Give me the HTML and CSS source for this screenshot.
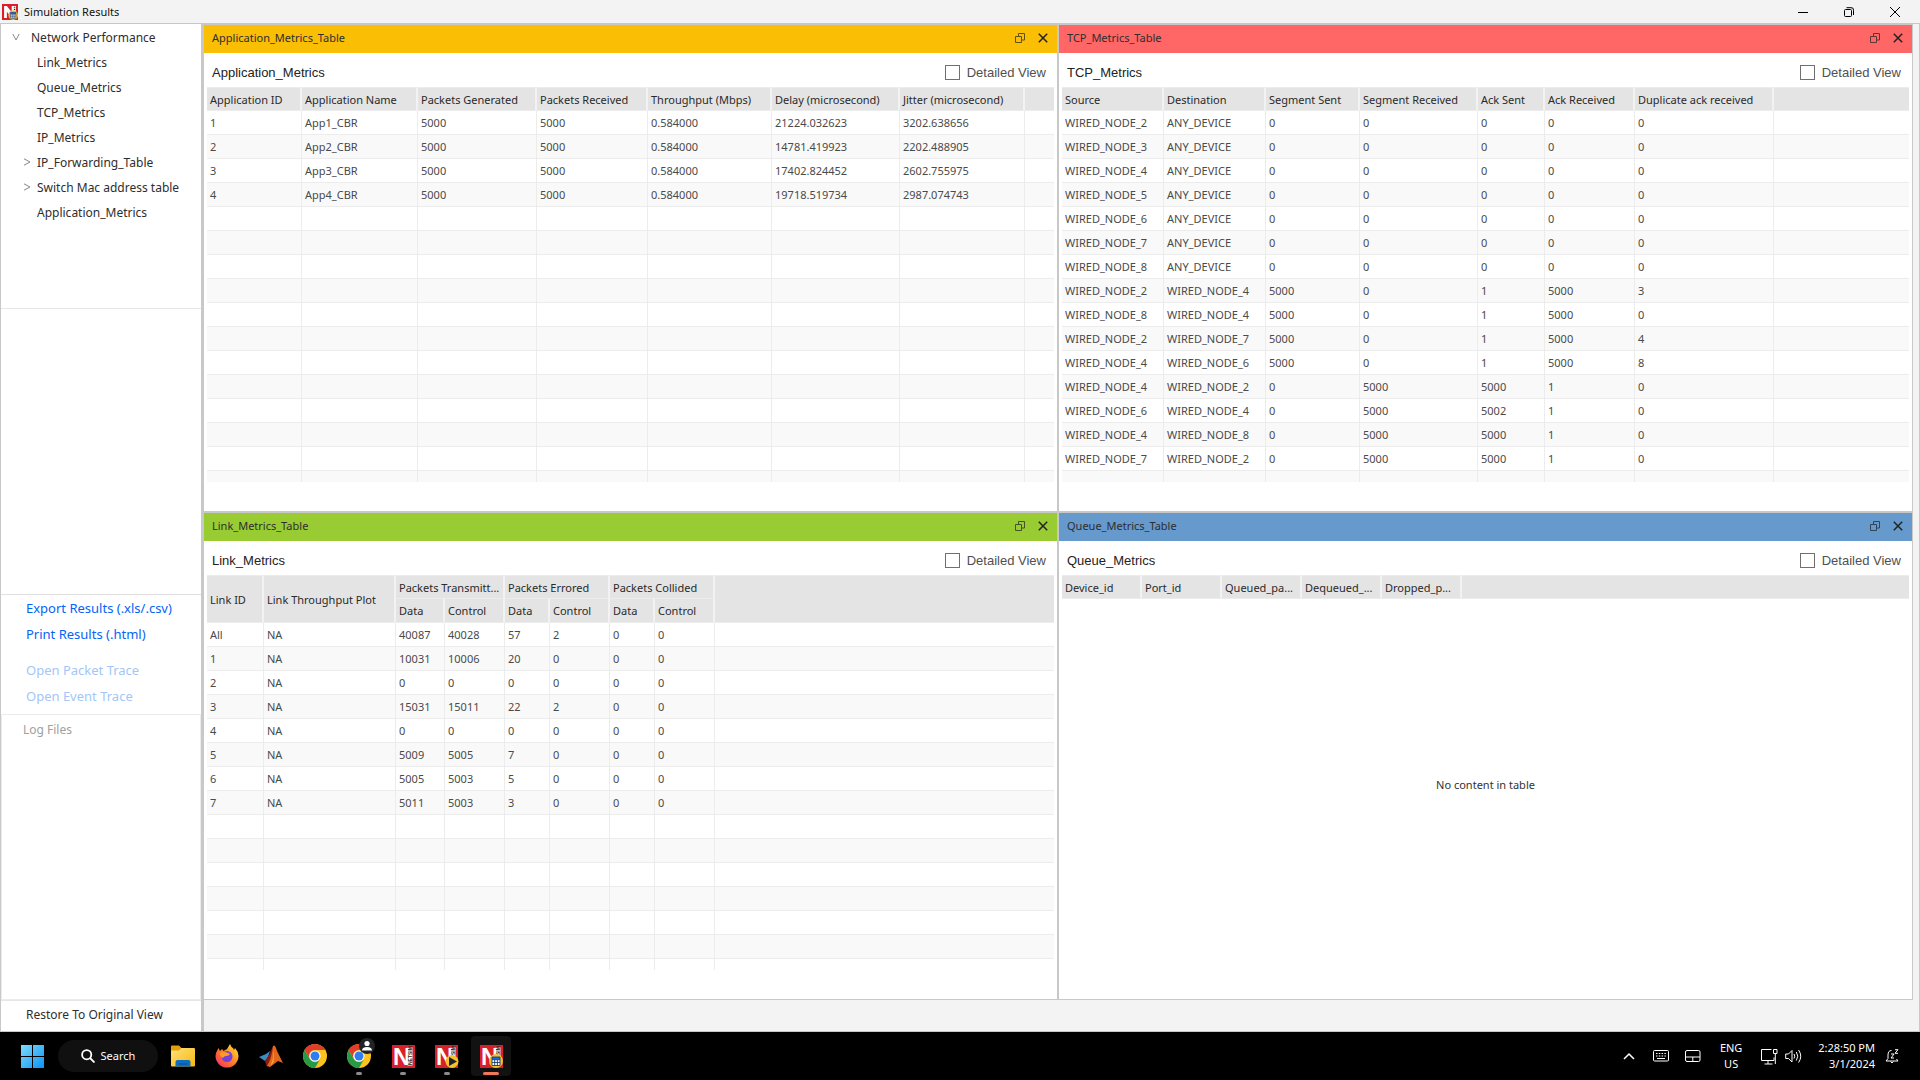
FILE: index.html
```html
<!DOCTYPE html>
<html lang="en">
<head>
<meta charset="utf-8">
<title>Simulation Results</title>
<link rel="stylesheet" href="styles.css">
</head>
<body>
<svg class="defs" aria-hidden="true">
  <symbol id="popout" viewBox="0 0 10 10"><path d="M.5 3.500h6v6h-6zM3.500 3.500v-3h6v6.500h-3" fill="none" stroke="currentColor"/></symbol>
  <symbol id="cross" viewBox="0 0 10 10"><path d="M.8.8l8.400 8.400M9.200.8L.8 9.200" fill="none" stroke="currentColor" stroke-width="1.500"/></symbol>
  <symbol id="netsim" viewBox="0 0 23 23">
    <path fill="#d9202a" d="M0 0h23v23H0z"/>
    <path fill="#fff" d="M15.500 2.500h5v18h-5z"/>
    <text class="logo-n" x="1" y="20">N</text>
    <text class="logo-name" transform="translate(20 20) rotate(-90)">NETSIM</text>
  </symbol>
  <symbol id="chrome" viewBox="0 0 24 24">
    <circle cx="12" cy="12" r="12" fill="#fcc31e"/>
    <path fill="#e33b2e" d="M1.610 6A12 12 0 0 1 22.390 6H12a6 6 0 0 0-5.200 9z"/>
    <path fill="#259b46" d="M1.610 6A12 12 0 0 0 12 24l5.200-9A6 6 0 0 1 6.800 15z"/>
    <circle cx="12" cy="12" r="5.600" fill="#fff"/><circle cx="12" cy="12" r="4.500" fill="#2f7df0"/>
  </symbol>
  <symbol id="table-badge" viewBox="0 0 14 14">
    <circle cx="7" cy="7" r="7" fill="#f2c230"/><path fill="#fff" d="M3 3h8v8.500H3z"/><path fill="#1668d8" d="M3 3h8v2.500H3z"/><path d="M3 3h8v8.500H3zM3 5.700h8M3 8.500h8M5.700 5.700v6M8.400 5.700v6" fill="none" stroke="#1d3c6e" stroke-width=".9"/>
  </symbol>
</svg>

<header class="titlebar">
  <svg class="app-icon" viewBox="0 0 23 23"><path fill="#d9202a" d="M0 0h23v23H0z"/><path fill="#fff" d="M3 3h4l7 9V3h6v17h-6L7 11v9H3z"/><path fill="#2b2b2b" d="M17 4h2v1.500h-2zM17 7h2v1.500h-2z"/><use href="#table-badge" x="9" y="9" width="14" height="14"/></svg>
  <h1>Simulation Results</h1>
  <div class="window-buttons">
    <button aria-label="Minimize"><svg width="10" height="10"><path d="M0 5.500h10" stroke="#000"/></svg></button>
    <button aria-label="Restore"><svg width="10" height="10" fill="none" stroke="#000"><rect x=".5" y="2.500" width="7" height="7" rx="1"/><path d="M2.500.7h4.500a2.300 2.300 0 0 1 2.500 2.500V8"/></svg></button>
    <button aria-label="Close"><svg width="10" height="10"><path d="M0 0l10 10M10 0L0 10" stroke="#000"/></svg></button>
  </div>
</header>

<main class="workspace">
  <aside class="sidebar">
    <nav class="tree">
      <a class="root" href="#network"><svg class="arrow" viewBox="0 0 8 8"><path d="M.8 1L4 7 7.200 1"/></svg>Network Performance</a>
      <a href="#link">Link_Metrics</a>
      <a href="#queue">Queue_Metrics</a>
      <a href="#tcp">TCP_Metrics</a>
      <a href="#ip">IP_Metrics</a>
      <a href="#forwarding"><svg class="arrow" viewBox="0 0 8 8"><path d="M1 .8L7 4 1 7.200"/></svg>IP_Forwarding_Table</a>
      <a href="#switch"><svg class="arrow" viewBox="0 0 8 8"><path d="M1 .8L7 4 1 7.200"/></svg>Switch Mac address table</a>
      <a href="#application">Application_Metrics</a>
    </nav>
    <div class="plots"></div>
    <div class="exports">
      <button>Export Results (.xls/.csv)</button>
      <button>Print Results (.html)</button>
      <button class="off spaced" disabled>Open Packet Trace</button>
      <button class="off" disabled>Open Event Trace</button>
    </div>
    <div class="logs">Log Files</div>
    <button class="restore">Restore To Original View</button>
  </aside>

  <div class="panels">
    <section class="panel" id="application">
      <header class="panel-title amber"><h2>Application_Metrics_Table</h2><button aria-label="Pop out"><svg class="pop"><use href="#popout"/></svg></button><button aria-label="Close"><svg><use href="#cross"/></svg></button></header>
      <div class="panel-bar"><h3>Application_Metrics</h3><label><input type="checkbox">Detailed View</label></div>
      <div class="sheet">
        <table>
          <colgroup><col style="width:95px"><col style="width:116px"><col style="width:119px"><col style="width:111px"><col style="width:124px"><col style="width:128px"><col style="width:125px"><col></colgroup>
          <thead><tr><th>Application ID<th>Application Name<th>Packets Generated<th>Packets Received<th>Throughput (Mbps)<th>Delay (microsecond)<th>Jitter (microsecond)<th></tr></thead>
          <tbody>
            <tr><td>1<td>App1_CBR<td>5000<td>5000<td>0.584000<td>21224.032623<td>3202.638656<td></tr>
            <tr><td>2<td>App2_CBR<td>5000<td>5000<td>0.584000<td>14781.419923<td>2202.488905<td></tr>
            <tr><td>3<td>App3_CBR<td>5000<td>5000<td>0.584000<td>17402.824452<td>2602.755975<td></tr>
            <tr><td>4<td>App4_CBR<td>5000<td>5000<td>0.584000<td>19718.519734<td>2987.074743<td></tr>
            <tr><td><td><td><td><td><td><td><td></tr>
            <tr><td><td><td><td><td><td><td><td></tr>
            <tr><td><td><td><td><td><td><td><td></tr>
            <tr><td><td><td><td><td><td><td><td></tr>
            <tr><td><td><td><td><td><td><td><td></tr>
            <tr><td><td><td><td><td><td><td><td></tr>
            <tr><td><td><td><td><td><td><td><td></tr>
            <tr><td><td><td><td><td><td><td><td></tr>
            <tr><td><td><td><td><td><td><td><td></tr>
            <tr><td><td><td><td><td><td><td><td></tr>
            <tr><td><td><td><td><td><td><td><td></tr>
            <tr><td><td><td><td><td><td><td><td></tr>
          </tbody>
        </table>
      </div>
    </section>

    <section class="panel" id="tcp">
      <header class="panel-title coral"><h2>TCP_Metrics_Table</h2><button aria-label="Pop out"><svg class="pop"><use href="#popout"/></svg></button><button aria-label="Close"><svg><use href="#cross"/></svg></button></header>
      <div class="panel-bar"><h3>TCP_Metrics</h3><label><input type="checkbox">Detailed View</label></div>
      <div class="sheet">
        <table>
          <colgroup><col style="width:102px"><col style="width:102px"><col style="width:94px"><col style="width:118px"><col style="width:67px"><col style="width:90px"><col style="width:139px"><col></colgroup>
          <thead><tr><th>Source<th>Destination<th>Segment Sent<th>Segment Received<th>Ack Sent<th>Ack Received<th>Duplicate ack received<th></tr></thead>
          <tbody>
            <tr><td>WIRED_NODE_2<td>ANY_DEVICE<td>0<td>0<td>0<td>0<td>0<td></tr>
            <tr><td>WIRED_NODE_3<td>ANY_DEVICE<td>0<td>0<td>0<td>0<td>0<td></tr>
            <tr><td>WIRED_NODE_4<td>ANY_DEVICE<td>0<td>0<td>0<td>0<td>0<td></tr>
            <tr><td>WIRED_NODE_5<td>ANY_DEVICE<td>0<td>0<td>0<td>0<td>0<td></tr>
            <tr><td>WIRED_NODE_6<td>ANY_DEVICE<td>0<td>0<td>0<td>0<td>0<td></tr>
            <tr><td>WIRED_NODE_7<td>ANY_DEVICE<td>0<td>0<td>0<td>0<td>0<td></tr>
            <tr><td>WIRED_NODE_8<td>ANY_DEVICE<td>0<td>0<td>0<td>0<td>0<td></tr>
            <tr><td>WIRED_NODE_2<td>WIRED_NODE_4<td>5000<td>0<td>1<td>5000<td>3<td></tr>
            <tr><td>WIRED_NODE_8<td>WIRED_NODE_4<td>5000<td>0<td>1<td>5000<td>0<td></tr>
            <tr><td>WIRED_NODE_2<td>WIRED_NODE_7<td>5000<td>0<td>1<td>5000<td>4<td></tr>
            <tr><td>WIRED_NODE_4<td>WIRED_NODE_6<td>5000<td>0<td>1<td>5000<td>8<td></tr>
            <tr><td>WIRED_NODE_4<td>WIRED_NODE_2<td>0<td>5000<td>5000<td>1<td>0<td></tr>
            <tr><td>WIRED_NODE_6<td>WIRED_NODE_4<td>0<td>5000<td>5002<td>1<td>0<td></tr>
            <tr><td>WIRED_NODE_4<td>WIRED_NODE_8<td>0<td>5000<td>5000<td>1<td>0<td></tr>
            <tr><td>WIRED_NODE_7<td>WIRED_NODE_2<td>0<td>5000<td>5000<td>1<td>0<td></tr>
            <tr><td><td><td><td><td><td><td><td></tr>
          </tbody>
        </table>
      </div>
    </section>

    <section class="panel" id="link">
      <header class="panel-title lime"><h2>Link_Metrics_Table</h2><button aria-label="Pop out"><svg class="pop"><use href="#popout"/></svg></button><button aria-label="Close"><svg><use href="#cross"/></svg></button></header>
      <div class="panel-bar"><h3>Link_Metrics</h3><label><input type="checkbox">Detailed View</label></div>
      <div class="sheet">
        <table>
          <colgroup><col style="width:57px"><col style="width:132px"><col style="width:49px"><col style="width:60px"><col style="width:45px"><col style="width:60px"><col style="width:45px"><col style="width:60px"><col></colgroup>
          <thead>
            <tr><th rowspan="2">Link ID<th rowspan="2">Link Throughput Plot<th colspan="2">Packets Transmitt...<th colspan="2">Packets Errored<th colspan="2">Packets Collided<th rowspan="2"></tr>
            <tr class="sub"><th>Data<th>Control<th>Data<th>Control<th>Data<th>Control</tr>
          </thead>
          <tbody>
            <tr><td>All<td>NA<td>40087<td>40028<td>57<td>2<td>0<td>0<td></tr>
            <tr><td>1<td>NA<td>10031<td>10006<td>20<td>0<td>0<td>0<td></tr>
            <tr><td>2<td>NA<td>0<td>0<td>0<td>0<td>0<td>0<td></tr>
            <tr><td>3<td>NA<td>15031<td>15011<td>22<td>2<td>0<td>0<td></tr>
            <tr><td>4<td>NA<td>0<td>0<td>0<td>0<td>0<td>0<td></tr>
            <tr><td>5<td>NA<td>5009<td>5005<td>7<td>0<td>0<td>0<td></tr>
            <tr><td>6<td>NA<td>5005<td>5003<td>5<td>0<td>0<td>0<td></tr>
            <tr><td>7<td>NA<td>5011<td>5003<td>3<td>0<td>0<td>0<td></tr>
            <tr><td><td><td><td><td><td><td><td><td></tr>
            <tr><td><td><td><td><td><td><td><td><td></tr>
            <tr><td><td><td><td><td><td><td><td><td></tr>
            <tr><td><td><td><td><td><td><td><td><td></tr>
            <tr><td><td><td><td><td><td><td><td><td></tr>
            <tr><td><td><td><td><td><td><td><td><td></tr>
            <tr><td><td><td><td><td><td><td><td><td></tr>
          </tbody>
        </table>
      </div>
    </section>

    <section class="panel" id="queue">
      <header class="panel-title blue"><h2>Queue_Metrics_Table</h2><button aria-label="Pop out"><svg class="pop"><use href="#popout"/></svg></button><button aria-label="Close"><svg><use href="#cross"/></svg></button></header>
      <div class="panel-bar"><h3>Queue_Metrics</h3><label><input type="checkbox">Detailed View</label></div>
      <div class="sheet">
        <table>
          <colgroup><col style="width:80px"><col style="width:80px"><col style="width:80px"><col style="width:80px"><col style="width:80px"><col></colgroup>
          <thead><tr><th>Device_id<th>Port_id<th>Queued_pa...<th>Dequeued_...<th>Dropped_p...<th></tr></thead>
        </table>
        <p class="empty">No content in table</p>
      </div>
    </section>
  </div>
</main>

<footer class="taskbar">
  <button class="start" aria-label="Start"><svg width="23" height="23"><defs><linearGradient id="win" x2="1" y2="1"><stop stop-color="#7fdcfb"/><stop offset="1" stop-color="#0a93f5"/></linearGradient></defs><path fill="url(#win)" d="M0 0h11v11H0zM12 0h11v11H12zM0 12h11v11H0zM12 12h11v11H12z"/></svg></button>
  <button class="search"><svg width="14" height="14" fill="none" stroke="#fff" stroke-width="1.800"><circle cx="5.700" cy="5.700" r="4.600"/><path d="M9 9l4.500 4.500"/></svg>Search</button>
  <button class="task" aria-label="File Explorer"><svg width="24" height="22"><path fill="#e3a008" d="M0 1.500Q0 .5 1 .5h7l2.500 2.500H23v4H0z"/><defs><linearGradient id="fold" x2="1" y2="1"><stop stop-color="#ffe07a"/><stop offset="1" stop-color="#f8b90e"/></linearGradient></defs><path fill="url(#fold)" d="M0 5.500h8L10.500 3H23q1 0 1 1v16.500q0 1-1 1H1q-1 0-1-1z"/><path fill="#0c6fc4" d="M4.500 21.500V17q0-2 2-2h11q2 0 2 2v4.500z"/><path fill="#0a4e94" d="M7.500 18.500h9v1h-9z"/></svg></button>
  <button class="task" aria-label="Firefox"><svg width="24" height="24"><defs><linearGradient id="fox" x1="1" x2="0" y2="1"><stop stop-color="#fff04a"/><stop offset=".45" stop-color="#ff8a1e"/><stop offset="1" stop-color="#f2246c"/></linearGradient></defs><path fill="url(#fox)" d="M1 9L3.500 4l1.500 3 2-2 1.500 2L12 5l3-5q1 3 3 4l1 2 1-2q3 3 3.500 8a11.500 11.500 0 1 1-23 0z"/><circle cx="12" cy="12.500" r="5.500" fill="#7541d8"/><path fill="#ff9b24" d="M5 9q4-2 8 0l2 1q-1 2-4 2-2 0-3 2-3-1-3-5z"/></svg></button>
  <button class="task" aria-label="MATLAB"><svg width="24" height="22"><path fill="#3e8cc4" d="M0 12l7-3 4-3-2 6-3 4z"/><path fill="#8a1f10" d="M6 16l4-6 4-9 2 3-4 13-4 5z"/><path fill="#e2661c" d="M14 1q2-2 4 5l6 12-5-2-4 3-4 3-3-1q5-8 6-20z"/><path fill="#f7a93c" d="M14.500 1q1 8 0 16l-3 4q4-9 3-20z"/></svg></button>
  <button class="task" aria-label="Chrome"><svg width="24" height="24"><use href="#chrome"/></svg></button>
  <button class="task running" aria-label="Chrome profile"><svg width="24" height="24"><use href="#chrome"/></svg><svg class="badge" width="16" height="16"><circle cx="8" cy="8" r="8" fill="#202427"/><circle cx="8" cy="5.500" r="2.600" fill="#fff"/><path fill="#fff" d="M3 12.500q0-3.500 5-3.500t5 3.500z"/></svg></button>
  <button class="task running" aria-label="NetSim"><svg width="23" height="23"><use href="#netsim"/></svg></button>
  <button class="task running" aria-label="NetSim player"><svg width="24" height="23"><use href="#netsim" width="23" height="23"/><circle cx="17" cy="16.500" r="6.500" fill="#f2c230"/><path fill="#222" d="M14 12l8 4.500-8 4.500z"/></svg></button>
  <button class="task active" aria-label="NetSim results"><svg width="23" height="23"><use href="#netsim"/><use href="#table-badge" x="9" y="9" width="14" height="14"/></svg></button>

  <div class="tray">
    <button class="chevron" aria-label="Show hidden icons"><svg width="12" height="8"><path d="M1 7l5-5 5 5" stroke-width="1.500"/></svg></button>
    <svg class="keyboard" width="16" height="12"><rect x=".5" y=".5" width="15" height="10.500" rx="1"/><path d="M3 3.500h10M3 6h10" stroke-dasharray="1.500 1.300"/><path d="M4 8.500h8"/></svg>
    <svg class="touchpad" width="16" height="12"><rect x=".5" y=".5" width="14.500" height="11" rx="1.500"/><path d="M.5 7h14.500M7.800 7v4.500"/></svg>
    <div class="lang">ENG<br>US</div>
    <svg class="network" width="17" height="17"><path d="M10.500 1.500h-10v11H13V9.500M7 12.500v3.500M3.500 16h8M12.500 1.500h3.500v4h-3.500zM14.300 5.500V16"/></svg>
    <svg class="sound" width="17" height="14"><path d="M.7 5h2.800L7 1.500v11.500L3.500 9.500H.7zM9 5q1.500 2.200 0 4.500M11.300 3q3 4.200 0 8.500M13.600 1q4.300 6.200 0 12.500"/></svg>
    <time class="clock">2:28:50 PM<br>3/1/2024</time>
    <svg class="bell" width="14" height="15"><path d="M6.500 1.500Q3 1.500 3 6v3.500L1 12h12l-1.500-2M5.500 12.500q1.500 3 3 0M6 5h3L6 9h3M10 .7h3L10 4.300h3"/></svg>
  </div>
</footer>
</body>
</html>
```

FILE: styles.css
```css
* { box-sizing: border-box; }
body {
  margin: 0;
  height: 100vh;
  display: flex;
  flex-direction: column;
  background: #f3f3f3;
  color: #2e2e2e;
  font: 12px/16px "Noto Sans", "Open Sans", sans-serif;
  overflow: hidden;
}
h1, h2, h3, p { margin: 0; font: inherit; }
button { margin: 0; padding: 0; border: 0; background: none; color: inherit; font: inherit; display: flex; align-items: center; justify-content: center; }
a { color: inherit; text-decoration: none; }
.defs { position: absolute; width: 0; height: 0; }
.logo-n { font: bold 24px "Liberation Sans", sans-serif; fill: #fff; }
.logo-name { font: bold 5px "Liberation Sans", sans-serif; fill: #222; }

/* window title bar */
.titlebar { height: 23px; flex: none; display: flex; align-items: center; gap: 6px; padding: 0 2px; color: #111; font-size: 11px; }
.app-icon { width: 16px; height: 16px; }
.window-buttons { margin-left: auto; display: flex; }
.window-buttons button { width: 46px; height: 20px; }

/* workspace */
.workspace { flex: 1; min-height: 0; display: flex; border: 1px solid #c8c8c8; }
.sidebar { width: 203px; flex: none; display: flex; flex-direction: column; background: #fff; border-right: 3px solid #c8c8c8; }
.tree, .plots, .logs { flex: 1 1 280px; min-height: 0; }
.tree { padding-top: 1px; border-bottom: 1px solid #e6e6e6; }
.tree a { height: 25px; display: flex; align-items: center; padding-left: 36px; }
.tree .root { padding-left: 30px; }
.tree .arrow { width: 8px; height: 8px; margin: 0 6px 2px -14px; fill: none; stroke: #888; stroke-width: 1; }
.tree .root .arrow { margin: 0 11px 2px -19px; }
.plots { border-bottom: 1px solid #e0e0e0; }
.exports { height: 120px; flex: none; display: flex; flex-direction: column; align-items: flex-start; padding-left: 25px; border-bottom: 1px solid #ececec; color: #0563f8; font-size: 13px; }
.exports button { height: 26px; }
.exports .off { color: #a3c6f8; }
.exports .spaced { margin-top: 10px; }
.logs { border: 1px solid #ececec; border-top: 0; padding: 7px 21px; color: #a0a0a0; }
.restore { height: 31px; flex: none; justify-content: flex-start; padding: 0 0 2px 25px; border-top: 1px solid #e6e6e6; }

.panels {
  flex: 1;
  min-width: 0;
  display: grid;
  grid-template: 1fr 1fr / 1fr 1fr;
  gap: 2px;
  margin: 0 6px 31px 0;
  padding: 1px 1px 1px 0;
  background: #c8c8c8;
}
.panel { min-width: 0; min-height: 0; display: flex; flex-direction: column; background: #fff; }
.panel-title { height: 28px; flex: none; display: flex; align-items: center; padding: 0 4px 2px 8px; font-size: 11px; }
.panel-title h2 { flex: 1; }
.panel-title button { width: 20px; height: 20px; margin-left: 3px; }
.panel-title svg { width: 10px; height: 10px; color: #222; }
.panel-title .pop { opacity: 0.7; }
.amber { background: #fabe05; }
.coral { background: #ff6666; }
.lime { background: #99cc33; }
.blue { background: #6699cc; }
.panel-bar { height: 34px; flex: none; display: flex; align-items: center; justify-content: space-between; padding: 5px 11px 0 8px; color: #222; font: 13px/16px "Liberation Sans", Arial, sans-serif; }
.panel-bar label { display: flex; align-items: center; gap: 7px; color: #505050; }
.panel-bar input { appearance: none; width: 15px; height: 15px; margin: 0; border: 1px solid #707070; background: #fff; }

/* data grids */
.sheet { flex: 1; min-height: 0; overflow: hidden; display: flex; flex-direction: column; margin: 0 3px 29px; font-size: 11px; }
table { width: 100%; table-layout: fixed; border-collapse: separate; border-spacing: 0; }
th, td { height: 24px; padding: 0 3px; text-align: left; white-space: nowrap; overflow: hidden; border-right: 1px solid #ececec; border-bottom: 1px solid #ececec; }
th { padding-top: 1px; background: #e4e4e4; color: #2a2a2a; font-weight: 400; border-right: 2px solid #f2f2f2; }
thead tr:first-child th { border-top: 1px solid #ececec; }
td { color: #4a4a4a; }
tr:not(.sub) > :last-child { border-right: 0; }
tbody tr:nth-child(even) { background: #f9f9f9; }
.empty { flex: 1; display: flex; align-items: center; justify-content: center; color: #333; }

/* taskbar */
.taskbar { height: 48px; flex: none; display: flex; align-items: center; background: #000; color: #fff; font-size: 11px; }
.start { width: 44px; height: 44px; margin: 0 4px 0 10px; }
.search { width: 100px; height: 32px; margin-right: 3px; gap: 6px; border-radius: 16px; background: #101010; }
.task { position: relative; width: 44px; height: 40px; }
.task .badge { position: absolute; right: 6px; top: 2px; }
.running::after, .active::after { content: ""; position: absolute; bottom: 1px; left: 19px; width: 6px; height: 3px; border-radius: 2px; background: #8c8c8c; }
.active { width: 40px; margin-left: 2px; border-radius: 4px; background: #121212; }
.active::after { left: 12px; width: 16px; background: #f0785a; }
.tray { margin-left: auto; display: flex; align-items: center; padding-right: 21px; }
.tray svg { fill: none; stroke: #fff; }
.chevron { margin-right: 18px; }
.keyboard { margin-right: 16px; }
.touchpad { margin-right: 18px; }
.lang { width: 24px; text-align: center; margin-right: 18px; }
.network { margin-right: 7px; }
.sound { margin-right: 16px; }
.clock { text-align: right; margin-right: 10px; }
```
